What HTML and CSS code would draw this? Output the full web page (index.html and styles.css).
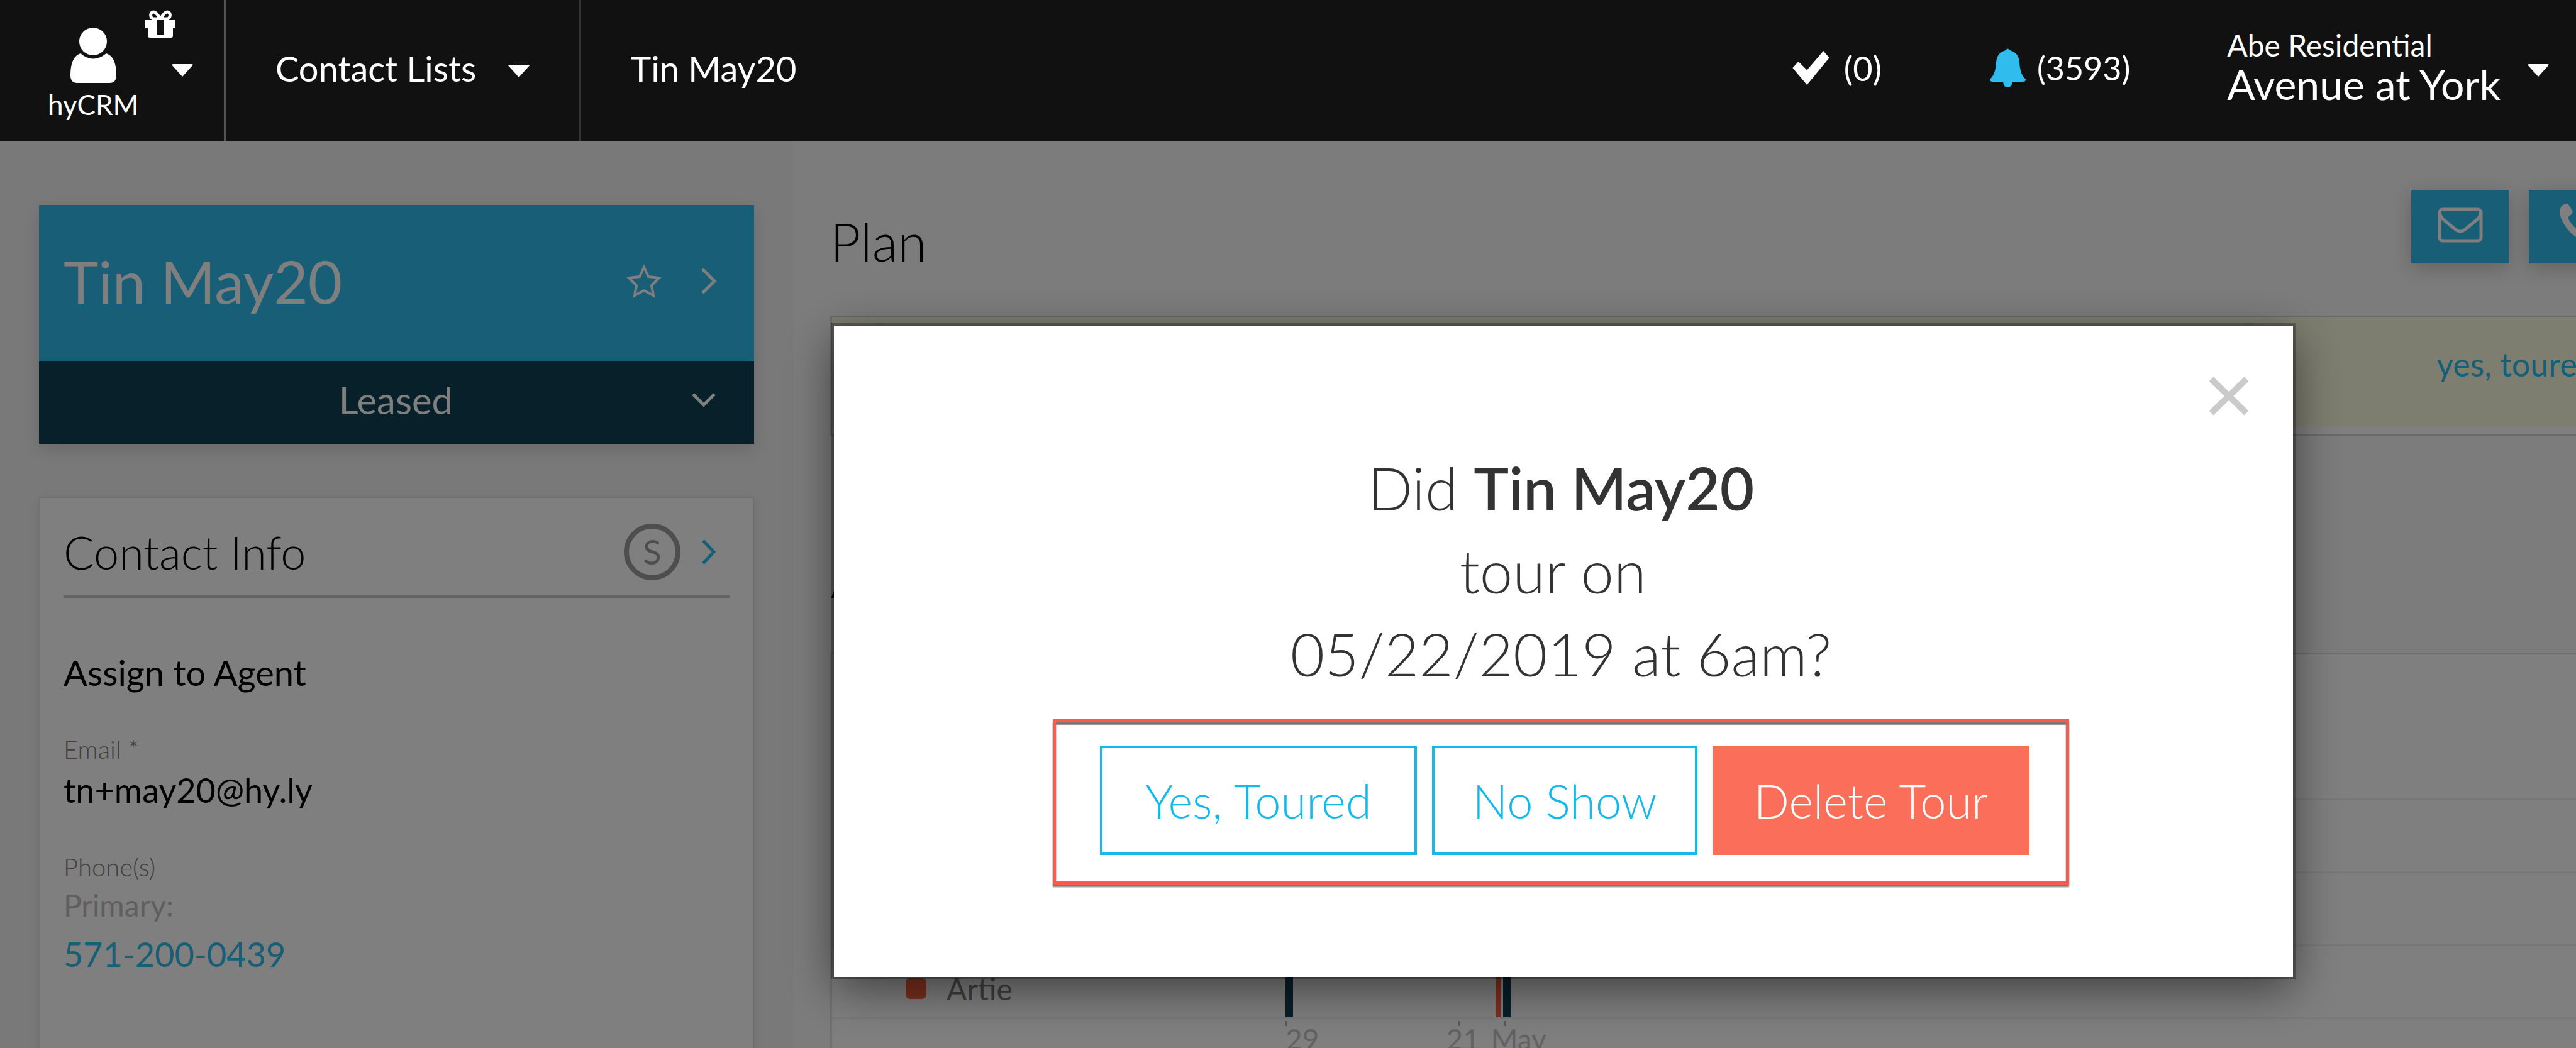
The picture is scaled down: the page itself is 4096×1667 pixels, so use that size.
FILE: index.html
```
<!DOCTYPE html>
<html lang="en">
<head>
    <meta charset="UTF-8">
    <meta name="viewport" content="width=device-width, initial-scale=1.0">
    <title>hyCRM - Tin May20</title>
    <link rel="stylesheet" href="styles.css">
</head>
<body>

<header class="topbar">
    <button type="button" class="brand">
        <span class="brand-logo">
            <svg class="icon-user" viewBox="0 0 73 88"><circle cx="36" cy="22" r="22"/><path d="M16 41 Q36 58 57 41 Q73 46 73 76 Q73 88 62 88 H11 Q0 88 0 76 Q0 46 16 41Z"/></svg>
            <span>hyCRM</span>
        </span>
        <svg class="icon-gift" viewBox="0 0 48 43"><path d="M0 15 H48 V28 H44 V40 Q44 43 41 43 H7 Q4 43 4 40 V28 H0Z"/><path class="ribbon" d="M24 14 C19 4 16 2 13 2 C7 2 7 13 14 13 H34 C41 13 41 2 35 2 C32 2 29 4 24 14Z"/><path class="slot" d="M19 15 H29 V38 H19Z"/></svg>
        <span class="caret"></span>
    </button>
    <nav class="crumbs">
        <a href="#" class="crumb crumb-lists">Contact Lists <span class="caret"></span></a>
        <a href="#" class="crumb">Tin May20</a>
    </nav>
    <a href="#" class="counter tasks">
        <svg class="icon-check" viewBox="0 0 69 64"><path d="M0 32 L11 20 L27 36 L58 0 L69 13 L27 64Z"/></svg>
        <span>(0)</span>
    </a>
    <a href="#" class="counter alerts">
        <svg class="icon-bell" viewBox="0 0 57 62"><path d="M25 3 Q28 -2 32 3 Q46 7 47 22 Q48 42 57 49 Q57 53 53 53 H36 Q35 62 28 62 Q22 62 21 53 H4 Q0 53 0 49 Q9 42 10 22 Q11 7 25 3Z"/></svg>
        <span>(3593)</span>
    </a>
    <button type="button" class="property">
        <span class="property-text">
            <span class="property-owner">Abe Residential</span>
            <span class="property-name">Avenue at York</span>
        </span>
        <span class="caret"></span>
    </button>
</header>

<div class="page">
    <aside class="sidebar">
        <section class="contact-card">
            <div class="contact-name">
                <h1>Tin May20</h1>
                <svg class="icon-star" viewBox="0 0 54 52"><path d="M27 4 L34 19 L51 21 L39 33 L42 49 L27 41 L12 49 L15 33 L3 21 L20 19Z"/></svg>
                <svg class="chevron" viewBox="0 0 28 44"><path d="M4 3 L23 22 L4 41"/></svg>
            </div>
            <button type="button" class="contact-status">
                <span>Leased</span>
                <svg class="chevron-down" viewBox="0 0 40 26"><path d="M3 4 L20 21 L37 4"/></svg>
            </button>
        </section>

        <section class="info-card">
            <div class="info-header">
                <h2>Contact Info</h2>
                <span class="source">S</span>
                <svg class="chevron" viewBox="0 0 28 44"><path d="M6 4 L23 22 L6 40"/></svg>
            </div>
            <p class="info-agent">Assign to Agent</p>
            <dl class="info-list">
                <dt>Email *</dt>
                <dd>tn+may20@hy.ly</dd>
                <dt>Phone(s)</dt>
                <dd class="phone"><span>Primary:</span><a href="tel:571-200-0439">571-200-0439</a></dd>
            </dl>
        </section>
    </aside>

    <main class="content">
        <div class="plan-header">
            <h2>Plan</h2>
            <div class="actions">
                <button type="button" aria-label="Email">
                    <svg class="icon-mail" viewBox="0 0 72 56"><rect x="3" y="3" width="66" height="50" rx="5"/><path d="M3 5 Q3 13 9 19 L27 34 Q36 42 45 34 L63 19 Q69 13 69 5"/></svg>
                </button>
                <button type="button" aria-label="Call">
                    <svg class="icon-phone" viewBox="0 0 60 60"><path d="M4 4 Q8 0 13 0 Q15 0 22 13 Q22 15 16 20 Q14 22 15 24 Q21 37 36 45 Q38 46 40 43 Q44 37 47 38 L59 45 Q61 48 58 54 Q54 60 44 60 Q24 56 10 36 Q-4 14 4 4Z"/></svg>
                </button>
            </div>
        </div>
        <section class="plan-card">
            <div class="plan-notice"><a href="#">yes, toured</a></div>
        </section>

        <h2 class="activity-title">Activity</h2>
        <section class="activity-card">
            <div class="chart-row chart-head"></div>
            <div class="chart-row"></div>
            <div class="chart-row"></div>
            <div class="chart-row chart-series">
                <div class="legend"><i></i>Artie</div>
                <div class="bar bar-teal"></div>
                <div class="bar bar-red"></div>
                <div class="bar bar-teal"></div>
            </div>
            <div class="chart-axis">
                <span>29</span>
                <span class="tick-mid">21</span>
                <span class="tick-month">May</span>
            </div>
        </section>
    </main>
</div>

<div class="overlay">
    <div class="modal" role="dialog" aria-modal="true" aria-labelledby="tour-question">
        <button type="button" class="modal-close" aria-label="Close">
            <svg viewBox="0 0 64 62"><path d="M4 4 L60 58 M60 4 L4 58"/></svg>
        </button>
        <p class="question" id="tour-question">Did <strong>Tin May20</strong><br>tour on&nbsp;<br>05/22/2019 at 6am?</p>
        <div class="choices">
            <button type="button" class="btn btn-wide">Yes, Toured</button>
            <button type="button" class="btn">No Show</button>
            <button type="button" class="btn btn-wide btn-danger">Delete Tour</button>
        </div>
    </div>
</div>

</body>
</html>
```
FILE: styles.css
```
* {
    box-sizing: border-box;
}

body {
    margin: 0;
    height: 100vh;
    overflow: hidden;
    display: flex;
    flex-direction: column;
    background: #f8f8f8;
    color: #000;
    font-family: Lato, "Open Sans", sans-serif;
    font-size: 54px;
}

h1, h2, p, dl, dd {
    margin: 0;
    font-weight: 300;
}

a {
    color: #30bced;
    text-decoration: none;
}

button {
    margin: 0;
    padding: 0;
    border: none;
    background: none;
    color: inherit;
    font: inherit;
    cursor: pointer;
}

svg {
    display: block;
    flex: none;
    fill: none;
    stroke: currentColor;
    overflow: visible;
}

/* Top bar */
.topbar {
    position: relative;
    z-index: 2;
    flex: none;
    height: 224px;
    display: flex;
    align-items: stretch;
    background: #111;
    color: #fff;
}

.topbar a {
    color: #fff;
}

.topbar svg {
    fill: currentColor;
    stroke: none;
}

.caret {
    flex: none;
    border: 18px solid transparent;
    border-top: 20px solid #fff;
    border-bottom: none;
    border-radius: 4px;
}

.brand {
    position: relative;
    width: 360px;
    padding: 0 48px 0 76px;
    display: flex;
    align-items: center;
    justify-content: space-between;
    border-right: 4px solid #555;
}

.brand-logo {
    display: flex;
    flex-direction: column;
    align-items: center;
    gap: 6px;
    padding-top: 14px;
    font-size: 44px;
    line-height: 56px;
}

.icon-user {
    width: 73px;
    height: 88px;
}

.topbar .icon-gift {
    position: absolute;
    top: 17px;
    left: 231px;
    width: 48px;
    height: 43px;
}

.topbar .icon-gift .ribbon {
    fill: none;
    stroke: #fff;
    stroke-width: 5px;
}

.icon-gift .slot {
    fill: #111;
}

.crumbs {
    flex: 1;
    display: flex;
}

.crumb {
    display: flex;
    align-items: center;
    padding: 0 78px 8px;
    font-size: 56px;
}

.crumb-lists {
    gap: 50px;
    border-right: 3px solid #333;
}

.crumb .caret {
    margin-top: 10px;
}

.counter {
    display: flex;
    align-items: center;
    gap: 18px;
    padding-bottom: 8px;
}

.tasks {
    margin-right: 172px;
}

.alerts {
    margin-right: 154px;
    font-size: 52px;
}

.icon-check {
    width: 69px;
    height: 54px;
}

.icon-bell {
    width: 57px;
    height: 62px;
    color: #30bced;
}

.property {
    display: flex;
    align-items: center;
    gap: 42px;
    padding-right: 42px;
    text-align: left;
}

.property-text {
    display: flex;
    flex-direction: column;
    padding-bottom: 16px;
}

.property-owner {
    font-size: 48px;
    line-height: 60px;
}

.property-name {
    font-size: 66px;
    line-height: 64px;
}

/* Page */
.page {
    flex: 1;
    min-height: 0;
    display: flex;
    overflow: hidden;
}

.sidebar {
    flex: none;
    width: 1262px;
    padding: 102px 63px 0 62px;
    background: #f2f2f2;
}

.contact-card {
    box-shadow: 0 10px 24px rgba(0, 0, 0, 0.12);
    color: #fff;
}

.contact-name {
    height: 249px;
    padding: 0 58px 8px 39px;
    display: flex;
    align-items: center;
    background: #30bced;
}

.contact-name h1 {
    flex: 1;
    font-size: 94px;
    font-weight: 400;
}

.icon-star {
    width: 54px;
    height: 52px;
    margin-right: 62px;
    stroke-width: 4px;
}

.chevron {
    width: 28px;
    height: 44px;
    stroke-width: 5px;
}

.contact-status {
    width: 100%;
    height: 131px;
    padding: 0 60px 10px 98px;
    display: flex;
    align-items: center;
    background: #104052;
}

.contact-status span {
    flex: 1;
    font-size: 60px;
}

.chevron-down {
    width: 40px;
    height: 26px;
    stroke-width: 5px;
}

.info-card {
    height: 1200px;
    margin-top: 84px;
    padding: 0 37px;
    background: #fff;
    border: 2px solid #e2e2e2;
    box-shadow: 0 4px 14px rgba(0, 0, 0, 0.08);
}

.info-header {
    height: 159px;
    padding: 16px 20px 0 0;
    display: flex;
    align-items: center;
    border-bottom: 4px solid #cacaca;
}

.info-header h2 {
    flex: 1;
    font-size: 72px;
}

.info-header .chevron {
    color: #30bced;
}

.source {
    width: 90px;
    height: 90px;
    margin-right: 30px;
    display: flex;
    align-items: center;
    justify-content: center;
    border: 8px solid #9c9c9c;
    border-radius: 50%;
    color: #9c9c9c;
}

.info-agent {
    margin-top: 84px;
    font-size: 56px;
    font-weight: 400;
    line-height: 70px;
}

.info-list dt {
    margin: 63px 0 6px;
    color: #808080;
    font-size: 40px;
    line-height: 48px;
}

.info-list dd {
    font-size: 54px;
    font-weight: 400;
    line-height: 70px;
}

.phone {
    display: flex;
    flex-direction: column;
    gap: 12px;
}

.phone span {
    color: #bebebe;
    font-size: 48px;
    line-height: 62px;
}

.content {
    flex: 1;
    min-width: 0;
    padding: 78px 0 0 58px;
    overflow: hidden;
}

.content h2 {
    font-size: 84px;
    line-height: 70px;
    font-weight: 300;
}

/* The cards run on past the right edge */
.plan-header,
.plan-card,
.activity-card {
    margin-right: -80px;
}

.plan-header {
    display: flex;
    align-items: flex-end;
    justify-content: space-between;
    margin-bottom: 83px;
}

.actions {
    display: flex;
    gap: 32px;
}

.actions button {
    width: 155px;
    height: 117px;
    padding-bottom: 5px;
    display: flex;
    align-items: center;
    justify-content: center;
    background: #30bced;
    box-shadow: 0 8px 30px rgba(0, 0, 0, 0.2);
    color: #fff;
}

.icon-mail {
    width: 72px;
    height: 56px;
    stroke-width: 5px;
}

.icon-phone {
    width: 60px;
    height: 60px;
    margin-bottom: 8px;
    fill: currentColor;
    stroke: none;
}

.plan-card {
    padding-bottom: 12px;
    background: #fff;
    border: 3px solid #d4d4d4;
}

.plan-notice {
    height: 174px;
    padding: 44px 46px 0 0;
    background: #fafae0;
    text-align: right;
    font-size: 52px;
    line-height: 60px;
}

.activity-title {
    margin: 191px 0 83px;
}

.activity-card {
    height: 900px;
    background: #fff;
    border: 3px solid #dedede;
}

.chart-row {
    height: 116px;
    border-bottom: 3px solid #f1f1f1;
}

.chart-head {
    height: 232px;
}

.chart-series {
    display: flex;
    align-items: flex-end;
}

.legend {
    width: 721px;
    height: 100%;
    padding: 22px 0 0 117px;
    display: flex;
    align-items: center;
    gap: 32px;
    color: #808080;
    font-size: 48px;
}

.legend i {
    width: 33px;
    height: 33px;
    border-radius: 7px;
    background: #f8603c;
}

.bar {
    width: 12px;
    height: 100px;
}

.bar-teal {
    background: #104052;
}

.bar-red {
    width: 8px;
    margin: 0 4px 0 322px;
    background: #f8603c;
}

.chart-axis {
    display: flex;
    padding-left: 721px;
    color: #c4c4c4;
    font-size: 46px;
    line-height: 42px;
}

.chart-axis span::before {
    content: "";
    display: block;
    width: 3px;
    height: 8px;
    margin-top: 3px;
    background: #b4b4b4;
}

.tick-mid {
    margin-left: 202px;
}

.chart-axis .tick-mid::before,
.chart-axis .tick-month::before {
    margin-left: 20px;
}

.tick-month {
    margin-left: 18px;
}

/* Modal */
.overlay {
    position: fixed;
    inset: 0;
    z-index: 1;
    padding: 518px 450px 0 1326px;
    background: rgba(0, 0, 0, 0.5);
}

.modal {
    position: relative;
    height: 1036px;
    padding: 192px 8px 0 0;
    background: #fff;
    box-shadow: 0 0 0 4px rgba(0, 0, 0, 0.3), 0 20px 70px rgba(0, 0, 0, 0.5);
    color: #333;
    text-align: center;
}

.modal-close {
    position: absolute;
    top: 81px;
    right: 70px;
    width: 64px;
    height: 62px;
    color: #cacaca;
}

.modal-close svg {
    stroke-width: 10px;
}

.question {
    font-size: 94px;
    line-height: 132px;
}

.question strong {
    font-weight: 600;
}

.choices {
    width: fit-content;
    margin: 38px auto 0;
    padding: 37px 58px 42px 70px;
    display: flex;
    gap: 24px;
    border: 5px solid #f95b50;
    box-shadow: 0 4px 2px #777, inset 0 4px 2px #777;
}

.btn {
    width: 422px;
    height: 174px;
    border: 4px solid #14b8ea;
    color: #14b8ea;
    font-size: 74px;
    font-weight: 300;
}

.btn-wide {
    width: 504px;
}

.btn-danger {
    border-color: #fa6e5a;
    background: #fa6e5a;
    color: #fff;
}
```
